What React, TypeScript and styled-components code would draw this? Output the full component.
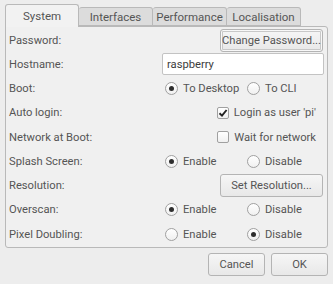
import styled, { createGlobalStyle } from 'styled-components';

const GlobalStyle = createGlobalStyle`
  html, body {
    margin: 0;
    padding: 0;
    background: #ededed;
  }
  body {
    font-family: Roboto, "Liberation Sans", sans-serif;
    font-size: 11px;
    color: #555555;
  }
`;

const Window = styled.div`
  width: 333px;
  height: 284px;
  padding: 4px 5px 0 5px;
  box-sizing: border-box;
  display: flex;
  flex-direction: column;
`;

const TabBar = styled.div`
  display: flex;
  align-items: flex-end;
  height: 22px;
`;

const Tab = styled.div<{ $active?: boolean }>`
  width: 74px;
  height: ${(p) => (p.$active ? '23px' : '19px')};
  box-sizing: border-box;
  display: flex;
  align-items: center;
  justify-content: center;
  font-size: 11.5px;
  border: 1px solid #b9b9b9;
  border-bottom: ${(p) => (p.$active ? 'none' : '1px solid #b9b9b9')};
  border-left: ${(p) => (p.$active ? '1px solid #b9b9b9' : 'none')};
  border-radius: 3px 3px 0 0;
  background: ${(p) => (p.$active ? '#f2f2f2' : '#dcdcdc')};
  margin-bottom: ${(p) => (p.$active ? '-1px' : '0')};
  position: relative;
  z-index: ${(p) => (p.$active ? 1 : 0)};
  padding-top: ${(p) => (p.$active ? '0' : '1px')};
`;

const Panel = styled.div`
  width: 323px;
  height: 222px;
  box-sizing: border-box;
  border: 1px solid #b9b9b9;
  border-radius: 0 3px 3px 3px;
  background: #f0f0f0;
  padding: 1px 4px 0 3px;
  display: grid;
  grid-auto-rows: 24.25px;
`;

const Row = styled.div`
  display: grid;
  grid-template-columns: 1fr 161px;
  align-items: center;
  font-size: 11.2px;
`;

const Label = styled.span`
  white-space: nowrap;
`;

const Controls = styled.div`
  display: grid;
  grid-template-columns: 82px 1fr;
  padding-left: 3px;
  align-items: center;
`;

const Button = styled.button<{ $default?: boolean; $w?: number }>`
  font: inherit;
  color: #555555;
  width: ${(p) => p.$w ?? 103}px;
  height: 23px;
  padding: 0;
  border: 1px solid #b4b4b4;
  border-radius: 3px;
  background: linear-gradient(#f6f6f6, #e8e8e8);
  box-shadow: ${(p) => (p.$default ? 'inset 0 0 0 1px #f8f8f8, inset 0 0 0 2px #c8c8c8' : 'none')};
  justify-self: end;
  white-space: nowrap;
  font-size: 11.2px;
`;

const Input = styled.input`
  font: inherit;
  color: #3c3c3c;
  width: 162px;
  height: 22px;
  box-sizing: border-box;
  border: 1px solid #c3c3c3;
  border-radius: 2px;
  background: #ffffff;
  padding: 0 4px;
  outline: none;
`;

const Option = styled.label`
  display: flex;
  align-items: center;
  gap: 5px;
  white-space: nowrap;
`;

const Radio = styled.span<{ $on?: boolean }>`
  width: 13px;
  height: 13px;
  box-sizing: border-box;
  border-radius: 50%;
  border: 1px solid #a0a0a0;
  background: linear-gradient(#ffffff, #f0f0f0);
  display: flex;
  align-items: center;
  justify-content: center;
  &::after {
    content: '';
    width: 5px;
    height: 5px;
    border-radius: 50%;
    background: #2e2e2e;
    display: ${(p) => (p.$on ? 'block' : 'none')};
  }
`;

const CheckWrap = styled.label`
  display: flex;
  align-items: center;
  gap: 5px;
  justify-self: end;
  margin-right: 7px;
  white-space: nowrap;
`;

const Box = styled.span`
  width: 12px;
  height: 12px;
  box-sizing: border-box;
  border: 1px solid #a0a0a0;
  border-radius: 2px;
  background: linear-gradient(#ffffff, #f0f0f0);
  display: flex;
  align-items: center;
  justify-content: center;
`;

const Footer = styled.div`
  display: flex;
  justify-content: flex-end;
  gap: 6px;
  padding: 5px 0 0 0;
`;

function RadioPair({ a, b, on }: { a: string; b: string; on: 0 | 1 }) {
  return (
    <Controls>
      <Option>
        <Radio $on={on === 0} />
        {a}
      </Option>
      <Option>
        <Radio $on={on === 1} />
        {b}
      </Option>
    </Controls>
  );
}

function Check({ text, on }: { text: string; on?: boolean }) {
  return (
    <CheckWrap>
      <Box>
        {on && (
          <svg width="10" height="10" viewBox="0 0 10 10">
            <path d="M1.5 5.2 L4 7.6 L8.6 2" fill="none" stroke="#222" strokeWidth="1.9" />
          </svg>
        )}
      </Box>
      {text}
    </CheckWrap>
  );
}

export default function App() {
  return (
    <>
      <GlobalStyle />
      <Window>
        <TabBar>
          <Tab $active>System</Tab>
          <Tab>Interfaces</Tab>
          <Tab>Performance</Tab>
          <Tab>Localisation</Tab>
        </TabBar>
        <Panel>
          <Row>
            <Label>Password:</Label>
            <Button $default>Change Password...</Button>
          </Row>
          <Row>
            <Label>Hostname:</Label>
            <Input defaultValue="raspberry" />
          </Row>
          <Row>
            <Label>Boot:</Label>
            <RadioPair a="To Desktop" b="To CLI" on={0} />
          </Row>
          <Row>
            <Label>Auto login:</Label>
            <Check text="Login as user 'pi'" on />
          </Row>
          <Row>
            <Label>Network at Boot:</Label>
            <Check text="Wait for network" />
          </Row>
          <Row>
            <Label>Splash Screen:</Label>
            <RadioPair a="Enable" b="Disable" on={0} />
          </Row>
          <Row>
            <Label>Resolution:</Label>
            <Button>Set Resolution...</Button>
          </Row>
          <Row>
            <Label>Overscan:</Label>
            <RadioPair a="Enable" b="Disable" on={0} />
          </Row>
          <Row>
            <Label>Pixel Doubling:</Label>
            <RadioPair a="Enable" b="Disable" on={1} />
          </Row>
        </Panel>
        <Footer>
          <Button $w={57}>Cancel</Button>
          <Button $w={57}>OK</Button>
        </Footer>
      </Window>
    </>
  );
}
